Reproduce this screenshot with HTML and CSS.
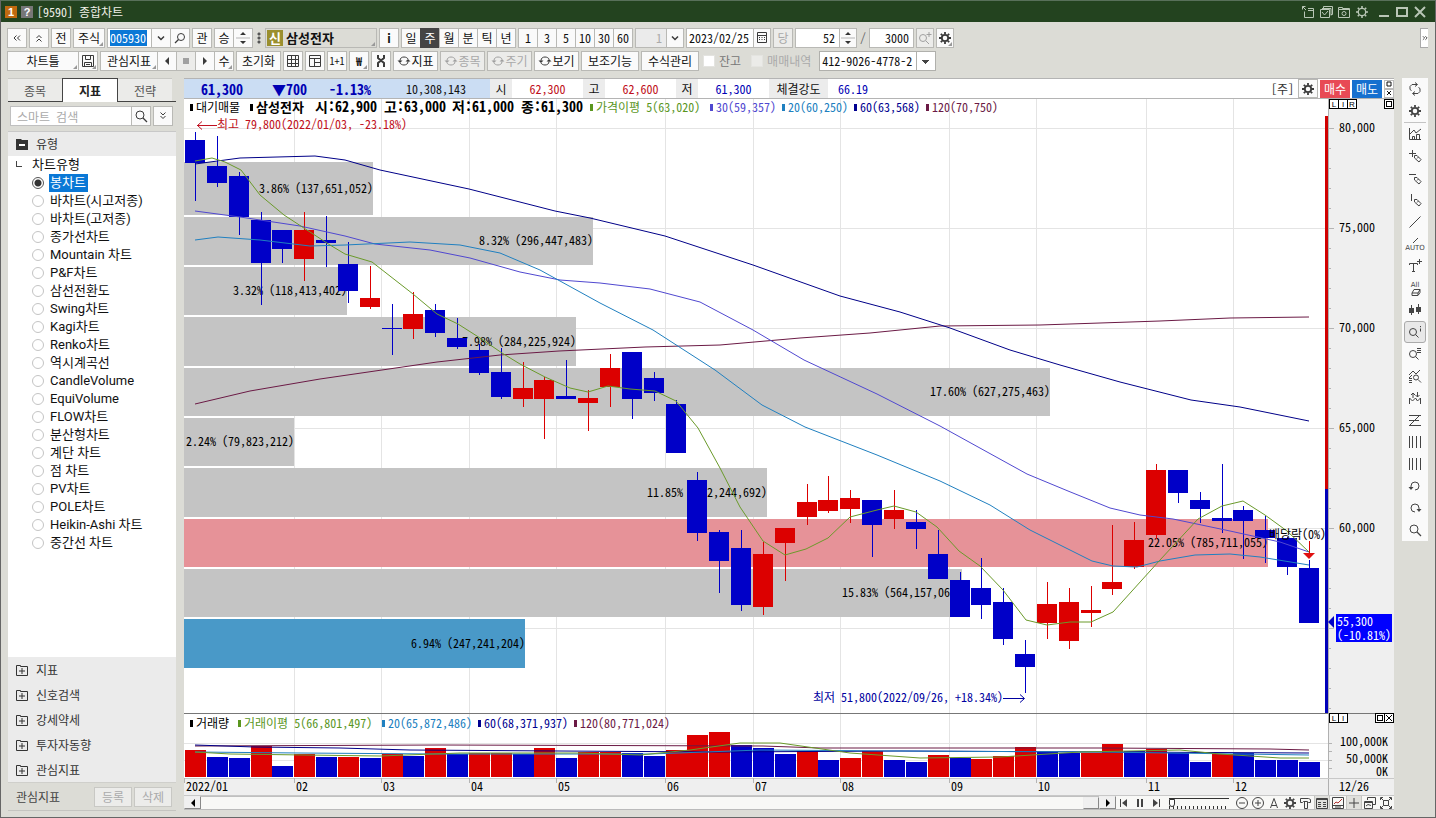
FILE: index.html
```html
<!DOCTYPE html>
<html lang="ko">
<head>
<meta charset="utf-8">
<title>[9590] 종합차트</title>
<link rel="stylesheet" href="styles.css">
</head>
<body>
<svg class="sprite" aria-hidden="true">
  <symbol id="gear" viewBox="0 0 14 14"><circle cx="7" cy="7" r="3.2" fill="none" stroke="currentColor" stroke-width="1.800"/><path d="M7 1v2M7 11v2M1 7h2M11 7h2M2.800 2.800l1.400 1.400M9.800 9.800l1.400 1.400M2.800 11.200l1.400-1.400M9.800 4.200l1.400-1.400" stroke="currentColor" stroke-width="1.800"/></symbol>
  <symbol id="gear-thin" viewBox="0 0 14 14"><circle cx="7" cy="7" r="3.700" fill="none" stroke="currentColor" stroke-width="1.300"/><path d="M7 1v2M7 11v2M1 7h2M11 7h2M2.800 2.800l1.400 1.400M9.800 9.800l1.400 1.400M2.800 11.200l1.400-1.400M9.800 4.200l1.400-1.400" stroke="currentColor" stroke-width="1.600"/></symbol>
  <symbol id="search" viewBox="0 0 14 14"><circle cx="6" cy="6" r="4" fill="none" stroke="currentColor"/><path d="M9 9l4 4" stroke="currentColor" stroke-width="1.300"/></symbol>
  <symbol id="search-flip" viewBox="0 0 14 14"><circle cx="8" cy="6" r="3.500" fill="none" stroke="currentColor"/><path d="M5.500 8.500l-3.500 3.500" stroke="currentColor" stroke-width="1.300"/></symbol>
  <symbol id="search-plus" viewBox="0 0 14 14"><circle cx="5" cy="7" r="3.500" fill="none" stroke="currentColor"/><path d="M8 10l3 3M11 1v5M8.500 3.500h5" stroke="currentColor"/></symbol>
  <symbol id="down" viewBox="0 0 14 14"><path d="M4 5.500l3 3 3-3" fill="none" stroke="currentColor" stroke-width="1.500"/></symbol>
  <symbol id="dbl-left" viewBox="0 0 14 14"><path d="M6.500 4.500l-2.500 2.500 2.500 2.500M10 4.500l-2.500 2.500 2.500 2.500" fill="none" stroke="currentColor"/></symbol>
  <symbol id="dbl-right" viewBox="0 0 14 14"><path d="M4 4.500l2.500 2.500-2.500 2.500M7.500 4.500l2.500 2.500-2.500 2.500" fill="none" stroke="currentColor"/></symbol>
  <symbol id="dbl-up" viewBox="0 0 14 14"><path d="M4.500 7l2.500-2.500 2.500 2.500M4.500 10.500l2.500-2.500 2.500 2.500" fill="none" stroke="currentColor"/></symbol>
  <symbol id="dbl-down" viewBox="0 0 14 14"><path d="M4.500 3.500l2.500 2.500 2.500-2.500M4.500 7l2.500 2.500 2.500-2.500" fill="none" stroke="currentColor"/></symbol>
  <symbol id="spin" viewBox="0 0 14 18"><path d="M4 6l3-3 3 3zM4 12l3 3 3-3z" fill="#333"/><path d="M0 9h14" stroke="#b4b4b4"/></symbol>
  <symbol id="tri-left" viewBox="0 0 14 14"><path d="M9 3v8L5 7z" fill="currentColor"/></symbol>
  <symbol id="tri-right" viewBox="0 0 14 14"><path d="M5 3v8l4-4z" fill="currentColor"/></symbol>
  <symbol id="square" viewBox="0 0 14 14"><path d="M4 4h6v6H4z" fill="currentColor"/></symbol>
  <symbol id="save" viewBox="0 0 14 14"><path d="M1.500 1.500h11v11h-11zM4.500 1.500v4h5v-4M3.500 12.500v-4h7v4M5 10.500h4" fill="none" stroke="currentColor"/></symbol>
  <symbol id="calendar" viewBox="0 0 14 14"><path d="M2.500 1.500h9v10h-9zM2.500 4.500h9" fill="none" stroke="currentColor"/><path d="M4 6.500h6M4 8.500h6" stroke="currentColor" stroke-dasharray="1 1.500"/></symbol>
  <symbol id="grid" viewBox="0 0 14 14"><path d="M1.500 1.500h11v11h-11zM5.500 1.500v11M9.500 1.500v11M1.500 5.500h11M1.500 9.500h11" fill="none" stroke="currentColor"/></symbol>
  <symbol id="layout" viewBox="0 0 14 14"><path d="M1.500 1.500h11v11h-11zM1.500 4.500h11M6.500 4.500v8M6.500 8.500h6" fill="none" stroke="currentColor"/></symbol>
  <symbol id="tools" viewBox="0 0 14 14"><path d="M4 1v3l6 5v4M10 1v3L4 9v4" fill="none" stroke="currentColor" stroke-width="2"/></symbol>
  <symbol id="sync" viewBox="0 0 14 14"><path d="M3 8V6.500C3 4 5 3 7 3s3.500 1 4 2M11 6v1.500C11 10 9 11 7 11s-3.500-1-4-2" fill="none" stroke="currentColor"/><path d="M.5 6.500L3 9l2.500-2.500zM8.500 7.500L11 5l2.500 2.500z" fill="currentColor"/></symbol>
  <symbol id="refresh" viewBox="0 0 14 14"><path d="M3.500 8.500l-1.500-1V4.500l2-2h5M7 .5l2.500 2L7 4.500M10.500 5.500l1.500 1v3l-2 2H5M7 9.500l-2.500 2 2.500 2" fill="none" stroke="currentColor"/></symbol>
  <symbol id="indicator" viewBox="0 0 14 14"><path d="M1.500 1v11.500H13M4.500 12V9.500h2V12M8.500 12V7.500h3V12M2 7l4-4 2 3 5-4" fill="none" stroke="currentColor"/></symbol>
  <symbol id="pen-cross" viewBox="0 0 14 14"><path d="M4.500 1v7M1 4.500h7M6.500 6.500h2.500l4 4-2 2.500-4.500-4zM9 9.500l1.500-1.500" fill="none" stroke="currentColor"/></symbol>
  <symbol id="pen-h" viewBox="0 0 14 14"><path d="M1 3.500h7M6.500 6.500h2.500l4 4-2 2.500-4.500-4zM9 9.500l1.500-1.500" fill="none" stroke="currentColor"/></symbol>
  <symbol id="pen-v" viewBox="0 0 14 14"><path d="M3.500 1v7M6.500 6.500h2.500l4 4-2 2.500-4.500-4zM9 9.500l1.500-1.500" fill="none" stroke="currentColor"/></symbol>
  <symbol id="line" viewBox="0 0 14 14"><path d="M1.500 12.500l11-11" stroke="currentColor"/></symbol>
  <symbol id="slash-top" viewBox="0 0 14 7"><path d="M5 6l5-5" stroke="currentColor"/></symbol>
  <symbol id="text-plus" viewBox="0 0 14 14"><path d="M1.500 6V4.500h8V6M5.500 4.500v8M4 12.500h3M11.500 0v5M9 2.500h5" fill="none" stroke="currentColor"/></symbol>
  <symbol id="eraser" viewBox="0 0 14 7"><path d="M4 4l2-3.500h6L10 4H4v2.500h6l2-3V.5M10 4v2" fill="none" stroke="currentColor"/></symbol>
  <symbol id="candles" viewBox="0 0 14 14"><path d="M1 5h5v5H1zM8 4h5v5H8z" fill="currentColor"/><path d="M3.500 2v10M10.500 1v10" stroke="currentColor"/></symbol>
  <symbol id="search-i" viewBox="0 0 14 14"><circle cx="5" cy="7" r="3.500" fill="none" stroke="currentColor"/><path d="M7.500 9.500l3 3M12.500 1v1.200M12.500 3.500v3" stroke="currentColor"/></symbol>
  <symbol id="search-list" viewBox="0 0 14 14"><circle cx="5" cy="7" r="3.500" fill="none" stroke="currentColor"/><path d="M7.500 9.500l3 3M9 1.500h4M9 3.500h4M9 5.500h4" stroke="currentColor"/></symbol>
  <symbol id="wave-search" viewBox="0 0 14 14"><path d="M1 6l4-4 3 3 4-4M1 9l3-3M1 9.500h3M1 11.500h3M1 13.500h3" fill="none" stroke="currentColor"/><circle cx="8" cy="8.500" r="2.500" fill="none" stroke="currentColor"/><path d="M10 10.500l3 3" stroke="currentColor"/></symbol>
  <symbol id="wave-arrows" viewBox="0 0 14 14"><path d="M1.500 13V7l3 3 3-3 2 3 3-3v6M5 7V2M3 4l2-2 2 2M9.500 1v5M7.500 4l2 2 2-2" fill="none" stroke="currentColor"/></symbol>
  <symbol id="zigzag" viewBox="0 0 14 14"><path d="M1 2.500h12M1 7.500h10M1 12.500h12M11 3L2 12" fill="none" stroke="currentColor"/></symbol>
  <symbol id="bars4" viewBox="0 0 14 14"><path d="M1.500 1v12M4.500 1v12M8.500 1v12M12.500 1v12" stroke="currentColor"/></symbol>
  <symbol id="undo" viewBox="0 0 14 14"><path d="M3 9V7a4 4 0 1 1 4 4" fill="none" stroke="currentColor"/><path d="M.5 8h5L3 11z" fill="currentColor"/></symbol>
  <symbol id="redo" viewBox="0 0 14 14"><path d="M11 9V7a4 4 0 1 0-4 4" fill="none" stroke="currentColor"/><path d="M8.500 8h5L11 11z" fill="currentColor"/></symbol>
  <symbol id="first" viewBox="0 0 14 14"><path d="M3.500 3v8" stroke="currentColor"/><path d="M10 3v8L5 7z" fill="currentColor"/></symbol>
  <symbol id="pause" viewBox="0 0 14 14"><path d="M5 3v8M9 3v8" stroke="currentColor" stroke-width="2"/></symbol>
  <symbol id="last" viewBox="0 0 14 14"><path d="M10.500 3v8" stroke="currentColor"/><path d="M4 3v8l5-4z" fill="currentColor"/></symbol>
  <symbol id="minus-c" viewBox="0 0 14 14"><circle cx="7" cy="7" r="5.500" fill="none" stroke="currentColor"/><path d="M4 7h6" stroke="currentColor"/></symbol>
  <symbol id="plus-c" viewBox="0 0 14 14"><circle cx="7" cy="7" r="5.500" fill="none" stroke="currentColor"/><path d="M4 7h6M7 4v6" stroke="currentColor"/></symbol>
  <symbol id="letter-a" viewBox="0 0 14 14"><path d="M3.500 12L7 2.500 10.500 12M4.500 9.500h5" fill="none" stroke="currentColor"/></symbol>
  <symbol id="hammer" viewBox="0 0 14 14"><path d="M1.500 2.500h8l2 1v3h-2l-1-1h-4l-1 1h-2zM5.500 6v6.500h3V6" fill="none" stroke="currentColor"/></symbol>
  <symbol id="table" viewBox="0 0 14 14"><path d="M1.500 2.500h11v10h-11zM1.500 3.500h11" fill="none" stroke="currentColor"/><path d="M3 6.500h3M8 6.500h3M3 8.500h3M8 8.500h3M3 10.500h3M8 10.500h3" stroke="currentColor"/></symbol>
  <symbol id="pic" viewBox="0 0 14 14"><path d="M1.500 1.500h11v11h-11z" fill="none" stroke="currentColor"/><path d="M3 8l2-2 2 1 4-4" fill="none" stroke="#b03030"/><path d="M2 9.500h10M4 11h6" stroke="currentColor"/></symbol>
  <symbol id="plus" viewBox="0 0 14 14"><path d="M7 2v10M2 7h10" stroke="currentColor"/></symbol>
  <symbol id="windows" viewBox="0 0 14 14"><path d="M4.500 4V1.500h8v7H10M1.500 5.500h8v7h-8zM1.500 6.500h8M3 10l2-1.500 3 1" fill="none" stroke="currentColor"/></symbol>
  <symbol id="expand" viewBox="0 0 14 14"><path d="M4.500 4.500h5v5h-5zM1.500 4V1.500H4M10 1.500h2.500V4M12.500 10v2.500H10M4 12.500H1.500V10M2 2l2.500 2.500M12 2L9.500 4.500M2 12l2.500-2.500M12 12L9.500 9.500" fill="none" stroke="currentColor"/></symbol>
  <symbol id="dock" viewBox="0 0 14 14"><path d="M1.500 4.500v-3h3M1.500 1.500L5 5M3.500 6.500v6h9v-9H7M7 5.500h5" fill="none" stroke="currentColor"/></symbol>
  <symbol id="stack" viewBox="0 0 14 14"><path d="M4.500 3V1.500h9v8H12M1.500 4.500h9v8h-9zM3 7l2.500 3L9 6M3 3.500h9v7" fill="none" stroke="currentColor"/></symbol>
  <symbol id="camera" viewBox="0 0 14 14"><path d="M1.500 4.500v-2h4v1h7v9h-11v-8h11" fill="none" stroke="currentColor"/><circle cx="7" cy="8.500" r="2" fill="none" stroke="currentColor"/></symbol>
  <symbol id="min" viewBox="0 0 14 14"><path d="M2 11h10" stroke="currentColor" stroke-width="2"/></symbol>
  <symbol id="max" viewBox="0 0 14 14"><path d="M2 3h10v8H2z" fill="none" stroke="currentColor" stroke-width="2"/></symbol>
  <symbol id="close" viewBox="0 0 14 14"><path d="M2 2l10 10M12 2L2 12" stroke="currentColor" stroke-width="2"/></symbol>
  <symbol id="mini-box" viewBox="0 0 8 8"><path d="M2 2h4v4H2z" fill="none" stroke="currentColor"/></symbol>
  <symbol id="mini-x" viewBox="0 0 8 8"><path d="M2 2l4 4M6 2L2 6" stroke="currentColor"/></symbol>
  <symbol id="folder" viewBox="0 0 14 14"><path d="M1 2h5l1 1h6v10H1z" fill="currentColor"/><path d="M4 8h6" stroke="#fff" stroke-width="2"/></symbol>
  <symbol id="folder-plus" viewBox="0 0 14 14"><path d="M1.500 2.500h4v1h7v9h-11zM4 8h6M7 5v6" fill="none" stroke="currentColor"/></symbol>
</svg>

<div class="window">
  <header class="titlebar">
    <span class="badge">1</span><span class="badge help">?</span>
    <h1>[9590] 종합차트</h1>
    <button aria-label="도킹"><svg><use href="#dock"/></svg></button>
    <button aria-label="복사"><svg><use href="#stack"/></svg></button>
    <button aria-label="캡처"><svg><use href="#camera"/></svg></button>
    <button aria-label="설정"><svg><use href="#gear-thin"/></svg></button>
    <button class="sys" aria-label="최소화"><svg><use href="#min"/></svg></button>
    <button aria-label="최대화"><svg><use href="#max"/></svg></button>
    <button aria-label="닫기"><svg><use href="#close"/></svg></button>
  </header>

  <div class="toolbars">
    <div class="bar">
      <button class="btn" aria-label="이전"><svg><use href="#dbl-left"/></svg></button>
      <button class="btn" aria-label="위로"><svg><use href="#dbl-up"/></svg></button>
      <button class="btn">전</button>
      <button class="btn w32 corner">주식</button>
      <div class="group">
        <label class="field w45"><input class="code" value="005930" aria-label="종목코드"></label>
        <button class="btn" aria-label="목록"><svg><use href="#down"/></svg></button>
        <button class="btn" aria-label="종목 찾기"><svg><use href="#search-flip"/></svg></button>
      </div>
      <button class="btn">관</button>
      <div class="group">
        <button class="btn">승</button>
        <button class="btn" aria-label="증감"><svg class="spin"><use href="#spin"/></svg></button>
      </div>
      <span class="dots"></span>
      <div class="stock corner"><span class="tag">신</span><strong>삼성전자</strong></div>
      <button class="btn"><b>i</b></button>
      <div class="group">
        <button class="btn">일</button><button class="btn on">주</button><button class="btn">월</button><button class="btn">분</button><button class="btn">틱</button><button class="btn">년</button>
      </div>
      <div class="group">
        <button class="btn">1</button><button class="btn">3</button><button class="btn">5</button><button class="btn">10</button><button class="btn">30</button><button class="btn">60</button>
      </div>
      <div class="group">
        <label class="field w32 off"><input value="1" disabled aria-label="분 주기"></label>
        <button class="btn w18" aria-label="주기 목록"><svg><use href="#down"/></svg></button>
      </div>
      <div class="group">
        <label class="field w68"><input class="date" value="2023/02/25" aria-label="날짜"></label>
        <button class="btn w18" aria-label="달력"><svg><use href="#calendar"/></svg></button>
      </div>
      <button class="btn dim">당</button>
      <div class="group">
        <label class="field w45"><input value="52" aria-label="표시 개수"></label>
        <button class="btn w18" aria-label="개수 증감"><svg class="spin"><use href="#spin"/></svg></button>
      </div>
      <span class="slash">/</span>
      <label class="field w45"><input value="3000" aria-label="전체 개수"></label>
      <button class="btn w18 dim" aria-label="확대"><svg><use href="#search-plus"/></svg></button>
      <button class="btn w18 corner" aria-label="설정"><svg><use href="#gear"/></svg></button>
      <button class="more" aria-label="더보기"><svg><use href="#dbl-right"/></svg></button>
    </div>
    <div class="bar">
      <div class="group">
        <button class="btn w72 corner">차트틀</button>
        <button class="btn corner" aria-label="저장"><svg><use href="#save"/></svg></button>
      </div>
      <div class="group">
        <button class="btn w58 corner">관심지표</button>
        <button class="btn" aria-label="뒤로"><svg><use href="#tri-left"/></svg></button>
        <button class="btn dim" aria-label="정지"><svg><use href="#square"/></svg></button>
        <button class="btn" aria-label="앞으로"><svg><use href="#tri-right"/></svg></button>
        <button class="btn corner">수</button>
      </div>
      <button class="btn w45">초기화</button>
      <button class="btn" aria-label="격자"><svg><use href="#grid"/></svg></button>
      <button class="btn" aria-label="배치"><svg><use href="#layout"/></svg></button>
      <button class="btn tiny">1+1</button>
      <button class="btn corner"><b>₩</b></button>
      <button class="btn" aria-label="도구"><svg><use href="#tools"/></svg></button>
      <button class="btn w45"><svg><use href="#sync"/></svg>지표</button>
      <button class="btn w45 dim"><svg><use href="#sync"/></svg>종목</button>
      <button class="btn w45 dim"><svg><use href="#sync"/></svg>주기</button>
      <button class="btn w45"><svg><use href="#sync"/></svg>보기</button>
      <button class="btn w58">보조기능</button>
      <button class="btn w58">수식관리</button>
      <label class="check"><input type="checkbox">잔고</label>
      <label class="check dim"><input type="checkbox" disabled>매매내역</label>
      <select class="account" aria-label="계좌번호"><option>412-9026-4778-2</option></select>
    </div>
  </div>

  <div class="body">
    <aside class="side">
      <nav class="tabs"><button>종목</button><button class="active">지표</button><button>전략</button></nav>
      <div class="find">
        <div class="group">
          <input placeholder="스마트 검색" aria-label="스마트 검색">
          <button class="btn" aria-label="검색"><svg><use href="#search"/></svg></button>
        </div>
        <button class="btn" aria-label="펼치기"><svg><use href="#dbl-down"/></svg></button>
      </div>
      <button class="section open"><svg><use href="#folder"/></svg>유형</button>
      <fieldset class="tree">
        <legend>차트유형</legend>
        <label><input type="radio" name="kind" checked><span>봉차트</span></label>
        <label><input type="radio" name="kind"><span>바차트(시고저종)</span></label>
        <label><input type="radio" name="kind"><span>바차트(고저종)</span></label>
        <label><input type="radio" name="kind"><span>종가선차트</span></label>
        <label><input type="radio" name="kind"><span>Mountain 차트</span></label>
        <label><input type="radio" name="kind"><span>P&amp;F차트</span></label>
        <label><input type="radio" name="kind"><span>삼선전환도</span></label>
        <label><input type="radio" name="kind"><span>Swing차트</span></label>
        <label><input type="radio" name="kind"><span>Kagi차트</span></label>
        <label><input type="radio" name="kind"><span>Renko차트</span></label>
        <label><input type="radio" name="kind"><span>역시계곡선</span></label>
        <label><input type="radio" name="kind"><span>CandleVolume</span></label>
        <label><input type="radio" name="kind"><span>EquiVolume</span></label>
        <label><input type="radio" name="kind"><span>FLOW차트</span></label>
        <label><input type="radio" name="kind"><span>분산형차트</span></label>
        <label><input type="radio" name="kind"><span>계단 차트</span></label>
        <label><input type="radio" name="kind"><span>점 차트</span></label>
        <label><input type="radio" name="kind"><span>PV차트</span></label>
        <label><input type="radio" name="kind"><span>POLE차트</span></label>
        <label><input type="radio" name="kind"><span>Heikin-Ashi 차트</span></label>
        <label><input type="radio" name="kind"><span>중간선 차트</span></label>
      </fieldset>
      <button class="section"><svg><use href="#folder-plus"/></svg>지표</button>
      <button class="section"><svg><use href="#folder-plus"/></svg>신호검색</button>
      <button class="section"><svg><use href="#folder-plus"/></svg>강세약세</button>
      <button class="section"><svg><use href="#folder-plus"/></svg>투자자동향</button>
      <button class="section"><svg><use href="#folder-plus"/></svg>관심지표</button>
      <div class="foot"><span>관심지표</span><button class="btn" disabled>등록</button><button class="btn" disabled>삭제</button></div>
    </aside>

    <main class="main">
      <div class="quote">
        <div class="now"><b>61,300</b><b>▼700</b><b>-1.13%</b><span>10,308,143</span></div>
        <span class="key">시</span><span class="val up">62,300</span>
        <span class="key">고</span><span class="val up">62,600</span>
        <span class="key">저</span><span class="val down">61,300</span>
        <span class="key long">체결강도</span><span class="val down power">66.19</span>
        <span class="period">[주]</span>
        <button class="btn" aria-label="차트 설정"><svg><use href="#gear"/></svg></button>
        <button class="trade buy">매수</button>
        <button class="trade sell">매도</button>
        <span class="mini"><button aria-label="창 크기"><svg><use href="#mini-box"/></svg></button><button aria-label="창 닫기"><svg><use href="#mini-x"/></svg></button></span>
      </div>
      <svg class="chart" id="price-chart" viewBox="184 99 1210 697" role="img" aria-label="삼성전자 주봉 차트"></svg>
      <div class="scroll">
        <button class="knob" aria-label="왼쪽"><svg><use href="#tri-left"/></svg></button>
        <div class="track"><span class="thumb"></span></div>
        <button class="knob" aria-label="오른쪽"><svg><use href="#tri-right"/></svg></button>
        <button aria-label="처음"><svg><use href="#first"/></svg></button>
        <button aria-label="일시정지"><svg><use href="#pause"/></svg></button>
        <button aria-label="마지막"><svg><use href="#last"/></svg></button>
        <label class="speed"><input type="range" value="0" aria-label="속도"></label>
        <button aria-label="축소"><svg><use href="#minus-c"/></svg></button>
        <button aria-label="확대"><svg><use href="#plus-c"/></svg></button>
        <button aria-label="글자"><svg><use href="#letter-a"/></svg></button>
        <button aria-label="설정"><svg><use href="#gear"/></svg></button>
        <button aria-label="도구"><svg><use href="#hammer"/></svg></button>
        <button class="sel" aria-label="표"><svg><use href="#table"/></svg></button>
        <button aria-label="그림"><svg><use href="#pic"/></svg></button>
        <button class="sel" aria-label="십자선"><svg><use href="#plus"/></svg></button>
        <button aria-label="창"><svg><use href="#windows"/></svg></button>
        <button aria-label="전체화면"><svg><use href="#expand"/></svg></button>
      </div>
    </main>

    <nav class="tools">
      <button aria-label="새로고침"><svg><use href="#refresh"/></svg></button>
      <button class="cut" aria-label="설정"><svg><use href="#gear"/></svg></button>
      <button aria-label="지표 차트"><svg><use href="#indicator"/></svg></button>
      <button aria-label="십자 그리기"><svg><use href="#pen-cross"/></svg></button>
      <button aria-label="수평선"><svg><use href="#pen-h"/></svg></button>
      <button aria-label="수직선"><svg><use href="#pen-v"/></svg></button>
      <button aria-label="추세선"><svg><use href="#line"/></svg></button>
      <button class="two"><svg><use href="#slash-top"/></svg>AUTO</button>
      <button aria-label="문자"><svg><use href="#text-plus"/></svg></button>
      <button class="two">All<svg><use href="#eraser"/></svg></button>
      <button aria-label="봉"><svg><use href="#candles"/></svg></button>
      <button class="picked" aria-label="정보"><svg><use href="#search-i"/></svg></button>
      <button aria-label="목록 조회"><svg><use href="#search-list"/></svg></button>
      <button aria-label="패턴 검색"><svg><use href="#wave-search"/></svg></button>
      <button aria-label="등락"><svg><use href="#wave-arrows"/></svg></button>
      <button aria-label="지그재그"><svg><use href="#zigzag"/></svg></button>
      <button aria-label="주기선"><svg><use href="#bars4"/></svg></button>
      <button aria-label="등간격선"><svg><use href="#bars4"/></svg></button>
      <button aria-label="실행 취소"><svg><use href="#undo"/></svg></button>
      <button aria-label="다시 실행"><svg><use href="#redo"/></svg></button>
      <button aria-label="돋보기"><svg><use href="#search"/></svg></button>
    </nav>
  </div>
</div>
<script src="chart.js"></script>
</body>
</html>
```
FILE: styles.css
```css
* { box-sizing: border-box; }
body {
  margin: 0;
  font: 12px/16px "Noto Sans Mono CJK KR", "Noto Sans CJK KR", sans-serif;
  color: #111;
  background: #dcdcd6;
}
button, input, select { font: inherit; color: inherit; margin: 0; }
button { display: flex; align-items: center; justify-content: center; padding: 0; border: 0; background: none; white-space: nowrap; }
svg { width: 14px; height: 14px; flex: none; }
.sprite { position: absolute; width: 0; height: 0; }

.window { display: flex; flex-direction: column; min-height: 100vh; border: 1px solid #666; border-top-color: #58705a; }
.titlebar { display: flex; align-items: center; gap: 4px; height: 21px; padding: 0 8px 0 4px; background: #23431f; color: #b9c6b6; }
.titlebar h1 { flex: 1; margin: 0; font-size: 12px; font-weight: 400; color: #f0f0e8; }
.badge { width: 12px; height: 12px; font: bold 11px/12px "Liberation Sans", sans-serif; text-align: center; color: #fff; background: #c06a10; }
.badge.help { background: #777; }
.titlebar .sys { margin-left: 4px; }
.titlebar button { width: 14px; }

.toolbars { display: flex; flex-direction: column; gap: 3px; padding: 6px 7px 7px 6px; }
.bar { display: flex; align-items: center; gap: 2px; height: 20px; }
.group { display: flex; }
.group > * + * { margin-left: -1px; }
.btn { position: relative; width: 20px; height: 20px; border: 1px solid #b9b9b5; background: #fafafa; flex: none; }
.btn.w18 { width: 18px; }
.w32, .btn.w32 { width: 32px; }
.w45, .btn.w45 { width: 45px; }
.btn.w58 { width: 58px; }
.w68 { width: 68px; }
.btn.w72 { width: 72px; }
.btn svg { color: #3a3a3a; }
.btn.on { color: #fff; background: #444; border-color: #444; }
.dim, .dim svg { color: #a9a9a9; }
.btn.dim { background: #ececea; }
.btn.dim svg { color: #a0a0a0; }
.corner::after { content: ""; position: absolute; right: 1px; bottom: 1px; border: 2px solid transparent; border-right-color: #999; border-bottom-color: #999; }
.btn .spin { width: 14px; height: 18px; }
.btn.tiny { font-size: 10px; }
.field { display: flex; align-items: center; justify-content: flex-end; height: 20px; padding: 0 4px 0 2px; border: 1px solid #b9b9b5; background: #fff; flex: none; }
.field input { width: 100%; min-width: 0; height: 16px; padding: 0; border: 0; background: none; text-align: right; }
.field .code { width: 38px; color: #fff; background: #0a78d6; text-align: left; }
.field:has(.code) { justify-content: flex-start; }
.field .date { text-align: left; }
.field.off { background: #ebebeb; color: #aaa; }
.dots { width: 8px; height: 12px; background: radial-gradient(circle, #555 1px, transparent 2px) 0 0 / 8px 4px; }
.stock { position: relative; display: flex; align-items: center; gap: 3px; width: 112px; height: 20px; padding-left: 1px; border: 1px solid #b9b9b5; font-size: 13px; }
.tag { width: 16px; height: 16px; color: #fff; background: #9a8f2e; text-align: center; line-height: 16px; font-weight: 700; }
.slash { width: 8px; text-align: center; color: #666; }
.more { width: 8px; height: 20px; margin-left: auto; border: 1px solid #aaa; border-right: 0; background: #fff; overflow: hidden; }
.more svg { width: 10px; }
.check { display: flex; align-items: center; gap: 4px; margin: 0 6px 0 2px; color: #777; white-space: nowrap; }
.check input { appearance: none; width: 12px; height: 12px; background: #fff; border: 1px solid #e4e4e0; }
.check.dim { color: #aaa; }
.check.dim input { background: #ebebe8; }
.account { appearance: none; width: 117px; height: 20px; padding: 0 2px; border: 1px solid #b0b0ac; border-radius: 0;
  background: linear-gradient(45deg, transparent 50%, #444 50%) right 9px top 8px / 4px 4px no-repeat,
    linear-gradient(-45deg, transparent 50%, #444 50%) right 5px top 8px / 4px 4px no-repeat,
    linear-gradient(#b0b0ac, #b0b0ac) right 18px top 0 / 1px 20px no-repeat, #fff; }

.body { flex: 1; display: flex; align-items: flex-start; gap: 8px; padding: 0 7px 6px; }
.side { display: flex; flex-direction: column; flex: none; align-self: stretch; width: 168px; border-bottom: 1px solid #c4c4c0; }
.tabs { display: flex; height: 24px; border-bottom: 1px solid #444; padding-right: 4px; }
.tabs button { flex: 1; height: 24px; border-top: 1px solid #c8c8c4; background: #ebebe9; font-size: 12px; color: #555; box-shadow: inset 0 -1px #444; }
.tabs .active { border: 1px solid #444; border-bottom: 0; background: #fff; color: #222; font-weight: 700; box-shadow: none; }
.find { display: flex; gap: 2px; padding: 4px 3px 5px 2px; }
.find .group { flex: 1; min-width: 0; }
.find input { flex: 1; min-width: 0; width: 0; height: 20px; padding: 0 6px; border: 1px solid #c0c0c0; background: #fff; }
.find input::placeholder { color: #aaa; }
.section { height: 25px; justify-content: flex-start; gap: 7px; padding-left: 7px; background: #ebebeb; color: #333; flex: none; }
.section.open { border-top: 1px solid #c8c8c8; }
.section.open svg { color: #333; }
.tree { flex: 1; margin: 0; padding: 0 0 0 24px; border: 0; background: #fff; font: 13px/18px Roboto, "Noto Sans CJK KR", sans-serif; }
.tree legend { padding: 0; height: 18px; float: left; width: 100%; }
.tree legend::before { content: ""; float: left; width: 5px; height: 5px; margin: 5px 0 0 -16px; border: solid #444; border-width: 0 0 1px 1px; }
.tree label { display: flex; align-items: center; gap: 5px; height: 18px; clear: both; }
.tree span { padding: 0 2px 0 1px; }
.tree input { appearance: none; width: 12px; height: 12px; border: 1px solid #c4c4c4; border-radius: 50%; background: #fff; }
.tree input:checked { border-color: #555; background: radial-gradient(circle, #333 3px, #fff 4px); }
.tree input:checked + span { color: #fff; background: #0a78d6; }
.foot { display: flex; align-items: center; gap: 2px; height: 28px; padding: 0 4px 0 8px; border-top: 1px solid #cfcfcb; color: #444; }
.foot span { flex: 1; }
.foot .btn { width: 38px; color: #aaa; background: #ececea; border-color: #c8c8c4; }

.main { flex: 1; min-width: 0; display: flex; flex-direction: column; border-bottom: 1px solid #bbb; }
.quote { display: flex; align-items: center; height: 21px; border: solid #b4b4b4; border-width: 1px 0; background: #fff; white-space: nowrap; }
.now { display: flex; align-items: center; width: 306px; height: 19px; background: #cbddf3; text-align: right; }
.now b { width: 64px; color: #0000b4; font-size: 14px; }
.now b:first-child { width: 59px; }
.now span { width: 95px; }
.key { width: 22px; height: 19px; line-height: 19px; text-align: center; background: #ececec; }
.key.long { width: 59px; }
.val { width: 71px; text-align: center; }
.val.power { width: auto; padding-left: 10px; }
.up { color: #c01020; }
.down { color: #0000b4; }
.period { margin-left: auto; margin-right: 4px; color: #333; }
.quote .btn { height: 19px; }
.trade { width: 30px; height: 18px; margin-left: 2px; color: #fff; }
.buy { background: #e84a55; }
.sell { background: #1670cf; }
.mini { display: flex; flex-direction: column; width: 10px; margin-left: 2px; }
.mini button { height: 9px; border: 1px solid #bbb; }
.mini svg { width: 8px; height: 8px; }
.chart { display: block; width: 100%; height: auto; background: #fff; font: 12px "Noto Sans Mono CJK KR", "Noto Sans CJK KR", sans-serif; }
.chart .strong { font-size: 14px; font-weight: 700; }
.chart .name { font-size: 13px; font-weight: 700; }
.chart .small { font: 8px "Liberation Sans", sans-serif; }
.chart polyline { fill: none; }
.scroll { display: flex; align-items: stretch; height: 13px; background: #f8f8f6; color: #444; }
.scroll button { width: 16px; }
.scroll .sel { background: #e0e0dc; border: 1px solid #c4c4c0; border-width: 0 1px; }
.scroll .knob { width: 17px; border: 1px solid #888; border-top-color: #eee; border-left-color: #eee; background: #f0f0f0; color: #000; }
.track { flex: 1; display: flex; justify-content: flex-end; border-top: 1px solid #c0c0c0; }
.thumb { width: 16px; border: 1px solid #888; border-top-color: #eee; border-left-color: #eee; background: #f0f0f0; }
.speed { display: flex; width: 70px; padding: 0 5px; }
.speed input { appearance: none; width: 100%; height: 13px; margin: 0; background: linear-gradient(#333, #333) 0 2px / 100% 1px no-repeat, repeating-linear-gradient(90deg, #333 0 1px, transparent 1px 4px) 0 10px / 100% 3px no-repeat; }
.speed input::-webkit-slider-thumb { appearance: none; width: 6px; height: 8px; border: 1px solid #333; border-radius: 0 0 3px 3px; background: #fff; }

.tools { display: flex; flex-direction: column; flex: none; width: 26px; padding: 0 2px; background: #fafafa; }
.tools button { height: 22px; color: #444; }
.tools .cut { box-shadow: 0 1px #c4c4c4; margin-bottom: 1px; }
.tools .picked { border: 1px solid #aaa; border-radius: 3px; background: #e8e8e8; }
.tools .two { flex-direction: column; font: 7px/8px "DejaVu Sans", sans-serif; }
.tools .two svg { height: 7px; }
```
FILE: chart.js
```js
// Candles: colour, body top, body bottom, high, low
const candles = `B140,163,132,201 B166,183,136,187 B176,217,172,235 B220,263,212,305 B230,249,230,263
R230,259,212,281 B240,243,216,267 B264,291,242,303 R298,307,266,309 B328,329,304,355
R314,329,292,339 B310,333,304,337 B338,347,318,349 B350,373,344,375 B372,397,348,399
R388,399,362,407 R380,399,377,439 B396,399,360,399 R398,403,390,431 R368,387,354,407
B352,399,352,419 B378,393,372,401 B404,453,400,453 B480,533,472,541 B532,561,530,593
B548,605,530,611 R554,607,542,615 R528,543,528,581 R502,517,484,525 R500,511,476,513
R498,509,490,523 B500,525,500,557 R510,519,490,529 B522,529,510,549 B554,579,530,579
B580,617,572,617 B588,605,558,619 B602,639,588,645 B654,667,640,693 R604,623,582,639
R602,641,588,649 R610,613,586,627 R582,589,525,595 R540,567,522,569 R470,535,464,539
B470,493,470,503 B500,509,492,523 B518,521,464,533 B510,521,506,559 B530,538,516,563
B538,567,537,575 B568,623,560,623`.split(/\s+/);

const volumes = `R750 B757 B758 R746 B766 R754 B757 R757 B758 R754 B756 R748 B754 R753 R753 B754 R748 B758 R752 R752
B753 B756 R750 R735 R732 B745 B748 B754 R751 B760 R758 R751 B760 B762 R755 B758 R759 R756 R747 B752
B753 R753 R744 B751 R749 B753 B762 R754 B753 B760 B760 B762`.split(/\s+/);

const profile = [
  [162, 215, 373, "3.86% (137,651,052)"], [217, 265, 593, "8.32% (296,447,483)"],
  [267, 315, 347, "3.32% (118,413,402)"], [317, 366, 576, "7.98% (284,225,924)"],
  [368, 416, 1050, "17.60% (627,275,463)"], [418, 466, 294, "2.24% (79,823,212)"],
  [468, 517, 767, "11.85% (422,244,692)"], [519, 567, 1268, "22.05% (785,711,055)", "#e69298"],
  [569, 617, 962, "15.83% (564,157,061)"], [619, 668, 525, "6.94% (247,241,204)", "#4999c8"]
];

const lines = [
  ["#6b1a45", "195,404 250,391 320,379 437,362 500,355 559,351 645,347 720,345 800,338 870,333 940,326 1040,325 1100,323 1160,321 1230,318 1309,317"],
  ["#000088", "195,164 240,158 315,156 345,160 380,170 469,189 555,211 590,218 665,236 753,265 840,296 900,312 950,328 1010,350 1060,365 1120,382 1191,400 1240,407 1309,421"],
  ["#5048d0", "195,211 240,217 300,226 345,236 375,244 430,250 470,258 520,272 560,280 600,283 650,289 700,302 753,330 804,360 877,394 940,426 1027,474 1068,491 1110,508 1140,515 1173,519 1230,531 1280,542 1309,552"],
  ["#2080c0", "195,240 218,237 260,240 310,246 345,245 410,242 460,245 500,253 540,270 600,303 653,330 715,370 762,405 805,427 877,455 940,481 990,505 1030,530 1092,561 1113,566 1137,567 1160,561 1195,555 1230,554 1260,557 1309,565"],
  ["#6a9a2a", "195,161 212,158 225,162 241,170 260,195 284,215 310,232 330,245 345,254 372,262 413,294 437,314 458,324 480,338 502,353 520,364 545,377 570,388 588,392 608,386 630,389 655,391 676,401 698,428 720,468 740,507 763,541 785,555 806,549 828,538 850,517 877,510 894,506 916,512 937,527 959,551 980,566 1003,590 1026,620 1047,625 1070,622 1091,622 1113,612 1160,560 1198,519 1222,506 1243,501 1265,515 1287,531 1309,552"],
  ["#6b1a45", "195,746 440,745 763,746 820,748 1100,748 1270,749 1309,750"],
  ["#000088", "195,745 255,747 340,748 410,750 560,751 720,752 900,751 1309,753"],
  ["#2080c0", "195,752 300,753 440,754 650,754 760,750 900,751 1100,752 1309,755"],
  ["#6a9a2a", "195,752 230,754 380,756 460,753 580,753 640,755 690,750 740,743 780,743 850,753 920,758 1000,757 1080,752 1180,750 1220,754 1280,758 1309,758"]
];

const months = [[184, "2022/01"], [294, "02"], [381, "03"], [469, "04"], [556, "05"], [665, "06"], [753, "07"], [840, "08"], [949, "09"], [1036, "10"], [1146, "11"], [1233, "12"]];
const ink = { R: "#dc0000", B: "#0000c8" };
const out = [];
const rect = (x, y, w, h, fill, extra = "") => out.push(`<rect x="${x}" y="${y}" width="${w}" height="${h}" fill="${fill}" ${extra}/>`);
const text = (x, y, s, fill = "#000", cls = "", anchor = "start") => out.push(`<text x="${x}" y="${y}" fill="${fill}" class="${cls}" text-anchor="${anchor}">${s}</text>`);
const path = (d, stroke, extra = "") => out.push(`<path d="${d}" stroke="${stroke}" fill="none" ${extra}/>`);
const centre = i => Math.round(195 + i * 1114 / 51);

// Grid and axis backgrounds
rect(1329, 99, 65, 697, "#efefef");
rect(184, 778, 1145, 18, "#efefef");
months.slice(1).forEach(([x]) => path(`M${x + .5} 99V777`, "#e4e4e4"));
[128, 228, 328, 428, 528, 628, 743, 760].forEach(y => path(`M184 ${y + .5}H1329`, "#e4e4e4"));

// Volume profile
profile.forEach(([top, bottom, right, label, fill = "#c4c4c4"]) => {
  rect(184, top, right - 184, bottom - top, fill);
  text(right, Math.round((top + bottom) / 2) + 4, label, "#000", "", "end");
});

// Candles and volume bars
candles.forEach((c, i) => {
  const [top, bottom, high, low] = c.slice(1).split(",").map(Number);
  const x = centre(i);
  rect(x, high, 1, low - high, ink[c[0]]);
  rect(x - 10, top, 20, bottom - top, ink[c[0]]);
});
volumes.forEach((v, i) => rect(centre(i) - 10, +v.slice(1), 21, 777 - v.slice(1), ink[v[0]]));
lines.forEach(([stroke, points]) => out.push(`<polyline points="${points}" stroke="${stroke}"/>`));

// Annotations
path("M197 125.5H217M202 121.500L197.500 125.500L202 129.500", "#c01020");
text(217, 129, "최고 79,800(2022/01/03, -23.18%)", "#c01020");
path("M1003 698.5H1024M1020 694.500L1024.500 698.500L1020 702.500", "#0000a0");
text(1003, 702, "최저 51,800(2022/09/26, +18.34%)", "#0000a0", "", "end");
text(1326, 539, "배당락(0%)", "#000", "", "end");
path("M1309.5 541V554", "#dc0000");
out.push('<path d="M1303 553h12l-6 6z" fill="#e01010"/>');

// Legends
const legend = (y, items) => items.forEach(([x, s, fill, cls]) => { rect(x - 6, y - 8, 3, 7, fill); text(x, y, s, fill, cls); });
legend(112, [[196, "대기매물", "#000"], [256, "삼성전자", "#000", "name"], [596, "가격이평 5(63,020)", "#5a961e"], [716, "30(59,357)", "#5048d0"], [788, "20(60,250)", "#2080c0"], [860, "60(63,568)", "#000090"], [932, "120(70,750)", "#6b1a45"]]);
[[315, "시:62,900"], [384, "고:63,000"], [452, "저:61,000"], [521, "종:61,300"]].forEach(([x, s]) => text(x, 112, s, "#000", "strong"));
path("M184 713.5H1394", "#777");
legend(728, [[196, "거래량", "#000"], [244, "거래이평 5(66,801,497)", "#5a961e"], [388, "20(65,872,486)", "#2080c0"], [484, "60(68,371,937)", "#000090"], [580, "120(80,771,024)", "#6b1a45"]]);

// Right axis
rect(1325, 116, 3, 373, "#d00000");
rect(1325, 489, 3, 224, "#0000b8");
path("M1328.5 99V796", "#b0b0b0");
for (let y = 128; y < 710; y += 20) path(`M1329 ${y + .5}h${(y - 28) % 100 ? 2 : 5}`, "#b4b4b4");
[["80,000", 132], ["75,000", 232], ["70,000", 332], ["65,000", 432], ["60,000", 532]].forEach(([s, y]) => text(1339, y, s));
[["100,000K", 746], ["50,000K", 763], ["0K", 776]].forEach(([s, y]) => text(1388, y, s, "#000", "", "end"));
[743, 751, 760, 768].forEach(y => path(`M1329 ${y + .5}h3`, "#b4b4b4"));
rect(1336, 614, 56, 28, "#0000ff");
out.push('<path d="M1334 616v12l-6-6z" fill="#0000c8"/>');
text(1337, 626, "55,300", "#fff");
text(1337, 640, "(-10.81%)", "#fff");
const key = (x, y, s) => {
  rect(x + .5, y + .5, 9, 9, "#fff", 'stroke="#000"');
  if (s) text(x + 5, y + 8, s, "#000", "small", "middle");
};
key(1329, 99, "L"); key(1338, 99, "I"); key(1347, 99, "R"); key(1384, 99);
rect(1386.5, 101.5, 5, 5, "none", 'stroke="#000"');
key(1329, 713, "L"); key(1338, 713, "I"); key(1375, 713); key(1384, 713);
rect(1377.5, 715.5, 5, 5, "none", 'stroke="#000"');
path("M1386 715l6 6M1392 715l-6 6", "#000");

// Date axis
path("M184 778.5H1394M184 795.5H1394", "#c8c8c8");
months.forEach(([x, s]) => { path(`M${x + .5} 778v5`, "#b4b4b4"); text(x + 2, 791, s); });
text(1339, 791, "12/26");

document.getElementById("price-chart").innerHTML = out.join("");
```
